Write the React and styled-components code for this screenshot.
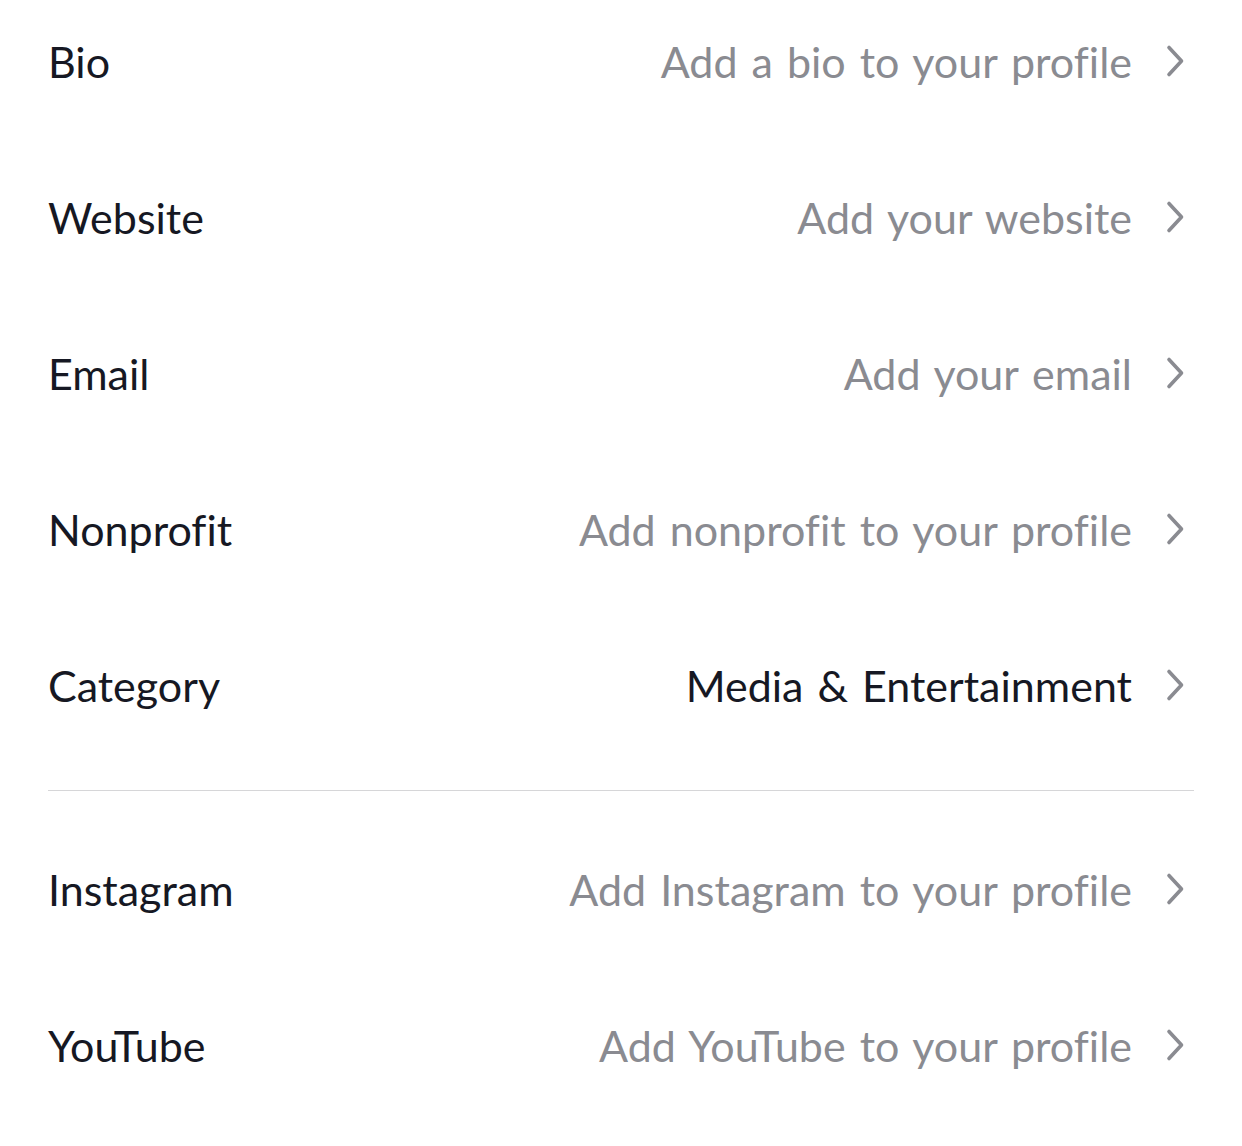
import React from "react";
import styled, { createGlobalStyle } from "styled-components";

const Global = createGlobalStyle`
  html, body {
    margin: 0;
    padding: 0;
    background: #fff;
  }
  body {
    font-family: Lato, "Noto Sans", "Liberation Sans", sans-serif;
    -webkit-font-smoothing: antialiased;
    font-variant-ligatures: none;
  }
`;

const Page = styled.div`
  width: 1242px;
  height: 1146px;
  overflow: hidden;
  box-sizing: border-box;
  padding: 0 48px;
`;

const List = styled.div`
  display: flex;
  flex-direction: column;
  margin-top: ${(p) => (p.$first ? "-17px" : "0")};
`;

const Row = styled.div`
  height: 156px;
  display: flex;
  align-items: center;
  justify-content: space-between;
`;

const Label = styled.span`
  font-size: 43px;
  color: #161823;
  word-spacing: 3px;
`;

const Right = styled.div`
  display: flex;
  align-items: center;
  gap: 34px;
`;

const Value = styled.span`
  font-size: 43px;
  word-spacing: 3px;
  color: ${(p) => (p.$filled ? "#161823" : "#8a8b91")};
`;

const Divider = styled.hr`
  border: 0;
  height: 1px;
  background: #d6d6d8;
  margin: 27px 0 20px;
`;

const Chevron = () => (
  <svg width="28" height="36" viewBox="0 0 28 36" fill="none">
    <path
      d="M3 4.5 L15.5 18 L3 31.5"
      stroke="#8a8b91"
      strokeWidth="3.6"
      strokeLinecap="round"
      strokeLinejoin="round"
    />
  </svg>
);

const top = [
  { label: "Bio", value: "Add a bio to your profile" },
  { label: "Website", value: "Add your website" },
  { label: "Email", value: "Add your email" },
  { label: "Nonprofit", value: "Add nonprofit to your profile" },
  { label: "Category", value: "Media & Entertainment", filled: true },
];

const social = [
  { label: "Instagram", value: "Add Instagram to your profile" },
  { label: "YouTube", value: "Add YouTube to your profile" },
];

const Item = ({ label, value, filled }) => (
  <Row>
    <Label>{label}</Label>
    <Right>
      <Value $filled={filled}>{value}</Value>
      <Chevron />
    </Right>
  </Row>
);

export default function App() {
  return (
    <>
      <Global />
      <Page>
        <List $first>
          {top.map((it) => (
            <Item key={it.label} {...it} />
          ))}
        </List>
        <Divider />
        <List>
          {social.map((it) => (
            <Item key={it.label} {...it} />
          ))}
        </List>
      </Page>
    </>
  );
}
